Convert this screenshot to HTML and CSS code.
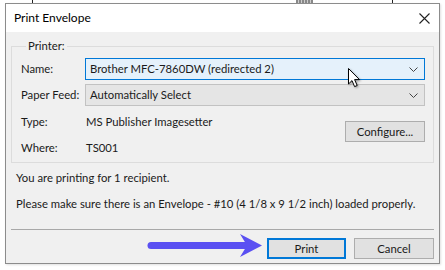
FILE: index.html
```html
<!DOCTYPE html>
<html>
<head>
<meta charset="utf-8">
<link rel="stylesheet" href="styles.css">
</head>
<body>
<div class="backdrop">
  <span class="bd-line bd-a"></span>
  <span class="bd-block"></span>
  <span class="bd-line bd-b"></span>
</div>
<div class="dialog">
  <div class="titlebar">
    <span class="title">Print Envelope</span>
    <svg class="close" width="11" height="11" viewBox="0 0 11 11"><path d="M0.5 0.5 L10.5 10.5 M10.5 0.5 L0.5 10.5" stroke="#222" stroke-width="1.1" fill="none"/></svg>
  </div>
  <div class="content">
    <fieldset class="group">
      <legend class="legend">Printer:</legend>
      <div class="grid">
        <span class="label">Name:</span>
        <div class="select select-active"><span>Brother MFC-7860DW (redirected 2)</span><svg class="chev" width="9" height="5" viewBox="0 0 9 5"><path d="M0.5 0.5 L4.5 4.5 L8.5 0.5" stroke="#444" fill="none"/></svg></div>
        <span class="label">Paper Feed:</span>
        <div class="select"><span>Automatically Select</span><svg class="chev" width="9" height="5" viewBox="0 0 9 5"><path d="M0.5 0.5 L4.5 4.5 L8.5 0.5" stroke="#444" fill="none"/></svg></div>
        <span class="label row-type">Type:</span>
        <span class="value row-type">MS Publisher Imagesetter</span>
        <button class="btn configure">Configure...</button>
        <span class="label row-where">Where:</span>
        <span class="value row-where">TS001</span>
      </div>
    </fieldset>
    <p class="msg msg1">You are printing for 1 recipient.</p>
    <p class="msg msg2">Please make sure there is an Envelope - #10 (4 1/8 x 9 1/2 inch) loaded properly.</p>
    <div class="separator"></div>
    <div class="buttons">
      <button class="btn btn-default">Print</button>
      <button class="btn">Cancel</button>
    </div>
  </div>
</div>
<svg class="annot-arrow" width="125" height="30" viewBox="140 232 125 30">
  <line x1="151" y1="245.5" x2="246" y2="245.5" stroke="#5a50f2" stroke-width="7" stroke-linecap="round"/>
  <path d="M240 234 L262 245.5 L240 257 L247 245.5 Z" fill="#5a50f2"/>
</svg>
<svg class="cursor" width="16" height="22" viewBox="0 0 16 22">
  <path d="M1.5 1.5 L1.5 17 L5 13.6 L7.6 19.6 L10.2 18.5 L7.6 12.6 L12.5 12.6 Z" fill="#fff" stroke="#000" stroke-width="1" stroke-linejoin="miter"/>
</svg>
</body>
</html>
```
FILE: styles.css
```css
html, body {
  margin: 0;
  padding: 0;
  background: #ffffff;
}
body {
  width: 445px;
  height: 270px;
  overflow: hidden;
  position: relative;
  font-family: "Lato", "Noto Sans", sans-serif;
  font-size: 11.3px;
  line-height: 16px;
  color: #1a1a1a;
  white-space: nowrap;
}
.backdrop {
  height: 3px;
  position: relative;
}
.bd-line {
  position: absolute;
  top: 0;
  width: 1px;
  height: 3px;
  background: #222;
}
.bd-a { left: 32px; }
.bd-b { left: 392px; }
.bd-block {
  position: absolute;
  left: 296px;
  top: 0;
  width: 17px;
  height: 3px;
  background: repeating-linear-gradient(90deg, #888 0 2px, #ccc 2px 3px);
}
.dialog {
  margin-left: 5px;
  width: 433px;
  height: 259px;
  border: 1px solid #8c8c8c;
  background: #f0f0f0;
  display: flex;
  flex-direction: column;
  box-shadow: 1px 1px 2px rgba(0,0,0,0.12);
}
.titlebar {
  height: 28px;
  background: #ffffff;
  display: flex;
  align-items: center;
  justify-content: space-between;
  padding: 0 9px 0 8px;
  flex: none;
}
.title {
  color: #000;
  font-size: 12px;
}
.close {
  display: block;
}
.content {
  padding: 6px 5px 0 5px;
  display: flex;
  flex-direction: column;
}
.group {
  margin: 0;
  border: 1px solid #dcdcdc;
  padding: 4px 8px 3px 9px;
  min-width: 0;
}
.legend {
  padding: 0 2px;
  margin-left: 5px;
  line-height: 16px;
  color: #1a1a1a;
}
.grid {
  display: grid;
  grid-template-columns: 64px 1fr auto;
  grid-template-rows: 22px 22px 23px 22px;
  row-gap: 4px;
  align-items: center;
}
.grid .select { grid-column: 2 / 4; }
.label { grid-column: 1; }
.value { grid-column: 2; padding-left: 1px; }
.row-type { grid-row: 3; }
.row-where { grid-row: 4; }
.configure {
  grid-column: 3;
  grid-row: 3 / 5;
  align-self: start;
  margin-top: 11px;
  width: 79px;
}
.select {
  height: 22px;
  box-sizing: border-box;
  border: 1px solid #c2c2c2;
  background: #e5e5e5;
  display: flex;
  align-items: center;
  justify-content: space-between;
  padding: 0 6px 0 4px;
}
.select-active {
  border-color: #0078d7;
  background: #e5f1fb;
}
.chev { display: block; }
.msg {
  margin: 0;
  padding-left: 5px;
  line-height: 16px;
}
.msg1 { margin-top: 7px; }
.msg2 { margin-top: 10px; }
.separator {
  margin-top: 17px;
  height: 1px;
  background: #a8a8a8;
}
.buttons {
  display: flex;
  justify-content: flex-end;
  gap: 8px;
  margin-top: 8px;
}
.btn {
  font-family: inherit;
  font-size: 11.3px;
  color: #1a1a1a;
  height: 21px;
  box-sizing: border-box;
  border: 1px solid #adadad;
  background: #e1e1e1;
  padding: 0;
  width: 80px;
  line-height: 18px;
}
.btn-default {
  border: 2px solid #0078d7;
  width: 79px;
}
.annot-arrow {
  position: absolute;
  left: 140px;
  top: 232px;
}
.cursor {
  position: absolute;
  left: 347px;
  top: 67px;
  filter: drop-shadow(1px 1px 1px rgba(0,0,0,0.35));
}
```
